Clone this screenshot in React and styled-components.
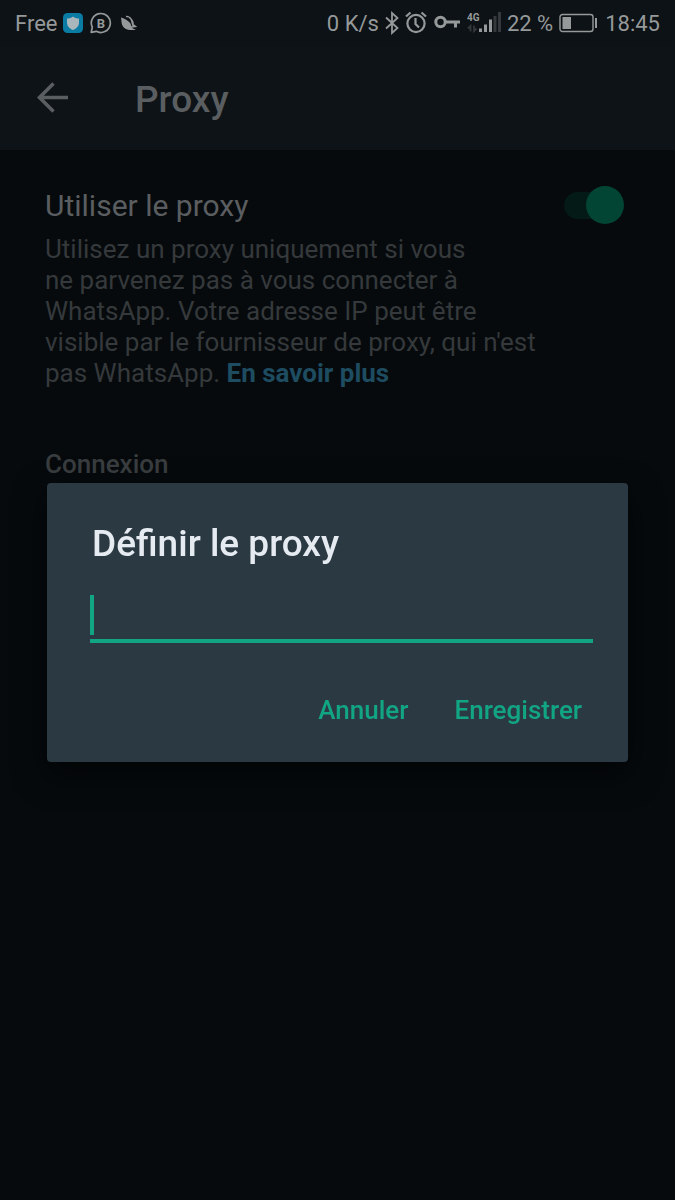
import React, { useState } from "react";

import styled, { createGlobalStyle } from "styled-components";

const App = () => {
  const [useProxy, setUseProxy] = useState(true);
  const [address, setAddress] = useState("");

  return (
    <>
      <GlobalStyle />
      <Page>
        <StatusBar />
        <AppBar>
          <BackButton type="button" aria-label="Retour">
            <svg width="32" height="32" viewBox="0 0 32 32">
              <path
                d="M31 15.500H3M16.500 1.500L2.500 15.500L16.500 29.500"
                fill="none"
                stroke="currentColor"
                strokeWidth="3.600"
              />
            </svg>
          </BackButton>
          <h1>Proxy</h1>
        </AppBar>
        <Settings>
          <SettingRow>
            <label htmlFor="use-proxy">Utiliser le proxy</label>
            <Toggle
              id="use-proxy"
              type="checkbox"
              role="switch"
              checked={useProxy}
              onChange={(e) => setUseProxy(e.target.checked)}
            />
          </SettingRow>
          <Description>
            Utilisez un proxy uniquement si vous
            <br />
            ne parvenez pas à vous connecter à<br />
            WhatsApp. Votre adresse IP peut être
            <br />
            visible par le fournisseur de proxy, qui n'est
            <br />
            pas WhatsApp. <a href="#proxy">En savoir plus</a>
          </Description>
          <SectionTitle>Connexion</SectionTitle>
        </Settings>
      </Page>
      <Overlay>
        <Dialog
          role="dialog"
          aria-labelledby="dialog-title"
          onSubmit={(e) => e.preventDefault()}
        >
          <h2 id="dialog-title">Définir le proxy</h2>
          <Field>
            {!address && <Caret />}
            <input
              type="text"
              aria-labelledby="dialog-title"
              value={address}
              onChange={(e) => setAddress(e.target.value)}
            />
          </Field>
          <Actions>
            <button type="button">Annuler</button>
            <button type="submit">Enregistrer</button>
          </Actions>
        </Dialog>
      </Overlay>
    </>
  );
};

const StatusBar = () => (
  <Status>
    <StatusGroup>
      <span>Free</span>
      {/* Shield */}
      <svg width="20" height="20" viewBox="0 0 20 20">
        <rect width="20" height="20" rx="4.500" fill="#0a7ba3" />
        <path
          d="M10 3.500C11.800 5 13.600 5.500 16 5.600V9.500C16 13.300 13.500 15.500 10 17C6.500 15.500 4 13.300 4 9.500V5.600C6.400 5.500 8.200 5 10 3.500Z"
          fill="#a9b6bb"
        />
      </svg>
      {/* WhatsApp Business */}
      <svg width="24" height="22" viewBox="-1 0 24 22">
        <path
          d="M1.200 20.400L2.300 15.200A9.500 9.500 0 1 1 6.200 19.300Z"
          fill="none"
          stroke="currentColor"
          strokeWidth="1.700"
          strokeLinejoin="round"
        />
        <text
          x="11"
          y="15.500"
          textAnchor="middle"
          fontSize="13"
          fontWeight="700"
          fill="currentColor"
        >
          B
        </text>
      </svg>
      {/* Bird */}
      <svg width="20" height="20" viewBox="0 0 20 20">
        <path
          d="M2 4.500C4.500 5 9 7 11.500 10.500L13 15L17 17H11C6 16.500 2.500 13.500 2.500 8.500Z"
          fill="currentColor"
        />
        <path
          d="M7 3.500C10 3 12.500 5.500 13.200 9.500L14 12.500C14.500 10.500 13.500 7 10.500 4.500M13.500 11L16.500 13.500L12 14"
          fill="none"
          stroke="currentColor"
          strokeWidth="1.500"
        />
      </svg>
    </StatusGroup>
    <StatusGroup>
      <span>0 K/s</span>
      {/* Bluetooth */}
      <svg width="14" height="24" viewBox="0 0 14 24">
        <path
          d="M1 6.500L12.500 17L7 22V2L12.500 7L1 17.500"
          fill="none"
          stroke="currentColor"
          strokeWidth="1.800"
        />
      </svg>
      {/* Alarm */}
      <svg width="22" height="24" viewBox="0 0 22 24">
        <g fill="none" stroke="currentColor" strokeWidth="2.200">
          <circle cx="11" cy="12.500" r="8.600" />
          <path d="M10.500 7V13L14 16.500M1 5.500L5.500 1.500M16.500 1.500L21 5.500" />
        </g>
      </svg>
      {/* VPN key */}
      <svg width="28" height="24" viewBox="0 0 28 24">
        <g fill="none" stroke="currentColor" strokeWidth="3">
          <circle cx="7.500" cy="11" r="4.700" />
          <path d="M12 11H27M22.500 11V16.500" />
        </g>
      </svg>
      {/* Mobile network */}
      <svg width="34" height="24" viewBox="0 0 34 24">
        <text
          x="0"
          y="9.500"
          fontSize="10"
          fontWeight="700"
          fill="currentColor"
        >
          4G
        </text>
        <path
          d="M3.500 20.500V15L1 17.500M7 14.500V20L9.500 17.500"
          fill="none"
          stroke="#35393b"
          strokeWidth="1.800"
        />
        <path
          d="M12 17.500H15V21H12ZM17 13.500H20V21H17ZM22 8.500H25V21H22Z"
          fill="currentColor"
        />
        <path d="M26.500 5H29.500V21H26.500ZM31 1H34V21H31Z" fill="#35393b" />
      </svg>
      <span>22 %</span>
      {/* Battery */}
      <svg width="38" height="20" viewBox="0 0 38 20">
        <rect
          x="1"
          y="1.500"
          width="33"
          height="17"
          rx="2.500"
          fill="none"
          stroke="currentColor"
          strokeWidth="1.400"
        />
        <path d="M3.500 4H12V16H3.500ZM36 5H38V15H36Z" fill="currentColor" />
      </svg>
      <Clock>18:45</Clock>
    </StatusGroup>
  </Status>
);

const GlobalStyle = createGlobalStyle`
  * {
    margin: 0;
    padding: 0;
    box-sizing: border-box;
  }
  body {
    background: #060a0d;
    font-family: Roboto, "Liberation Sans", sans-serif;
  }
  button, input {
    font-family: inherit;
    border: none;
    background: none;
  }
`;
const Page = styled.div`
  min-height: 100vh;
  background: #060a0d;
`;
const Status = styled.header`
  display: flex;
  align-items: center;
  justify-content: space-between;
  height: 46px;
  padding: 0 15px;
  background: #0c1215;
  color: #96999a;
  font-size: 22px;
  white-space: nowrap;
`;
const StatusGroup = styled.div`
  display: flex;
  align-items: center;
  gap: 6px;
  svg {
    flex-shrink: 0;
  }
`;
const Clock = styled.span`
  margin-left: 2px;
`;
const AppBar = styled.div`
  display: flex;
  align-items: center;
  gap: 66px;
  height: 104px;
  padding: 0 37px;
  background: #0d1316;
  color: #5b5e60;
  h1 {
    padding-top: 2px;
    font-size: 37px;
    font-weight: 500;
  }
`;
const BackButton = styled.button`
  display: flex;
  color: inherit;
`;
const Settings = styled.main`
  padding: 36px 45px;
`;
const SettingRow = styled.div`
  display: flex;
  align-items: center;
  justify-content: space-between;
  height: 38px;
  padding-right: 6px;
  color: #5b5e60;
  font-size: 30px;
`;
const Toggle = styled.input`
  appearance: none;
  display: flex;
  align-items: center;
  width: 60px;
  height: 38px;
  &::before {
    content: "";
    width: 52px;
    height: 27px;
    border-radius: 14px;
    background: #041a17;
  }
  &::after {
    content: "";
    flex-shrink: 0;
    width: 38px;
    height: 38px;
    margin-left: ${({ checked }) => (checked ? "-30px" : "-52px")};
    border-radius: 50%;
    background: #024534;
  }
`;
const Description = styled.p`
  margin-top: 10px;
  color: #35393b;
  font-size: 26px;
  line-height: 31px;
  a {
    color: #1e4c60;
    font-weight: 700;
    text-decoration: none;
  }
`;
const SectionTitle = styled.h2`
  margin-top: 59px;
  color: #393d3f;
  font-size: 26px;
  font-weight: 500;
  line-height: 32px;
`;
const Overlay = styled.div`
  position: fixed;
  inset: 0;
  display: flex;
  align-items: center;
  padding: 45px 47px 0;
`;
const Dialog = styled.form`
  width: 100%;
  padding: 38px 35px 27px 43px;
  border-radius: 4px;
  background: #2b3943;
  box-shadow: 0 12px 32px rgba(0, 0, 0, 0.6);
  h2 {
    padding-left: 2px;
    color: #e6ebf1;
    font-size: 37px;
    font-weight: 500;
    line-height: 46px;
  }
`;
const Field = styled.div`
  display: flex;
  height: 48px;
  margin-top: 28px;
  border-bottom: 4px solid #12a583;
  input {
    flex: 1;
    min-width: 0;
    height: 40px;
    color: #e6ebf1;
    font-size: 30px;
    caret-color: #12a583;
    outline: none;
  }
`;
const Caret = styled.span`
  width: 4px;
  height: 40px;
  background: #12a583;
`;
const Actions = styled.div`
  display: flex;
  justify-content: flex-end;
  gap: 46px;
  margin-top: 42px;
  padding-right: 11px;
  button {
    height: 50px;
    color: #12a583;
    font-size: 26px;
    font-weight: 500;
  }
`;
export default App;
